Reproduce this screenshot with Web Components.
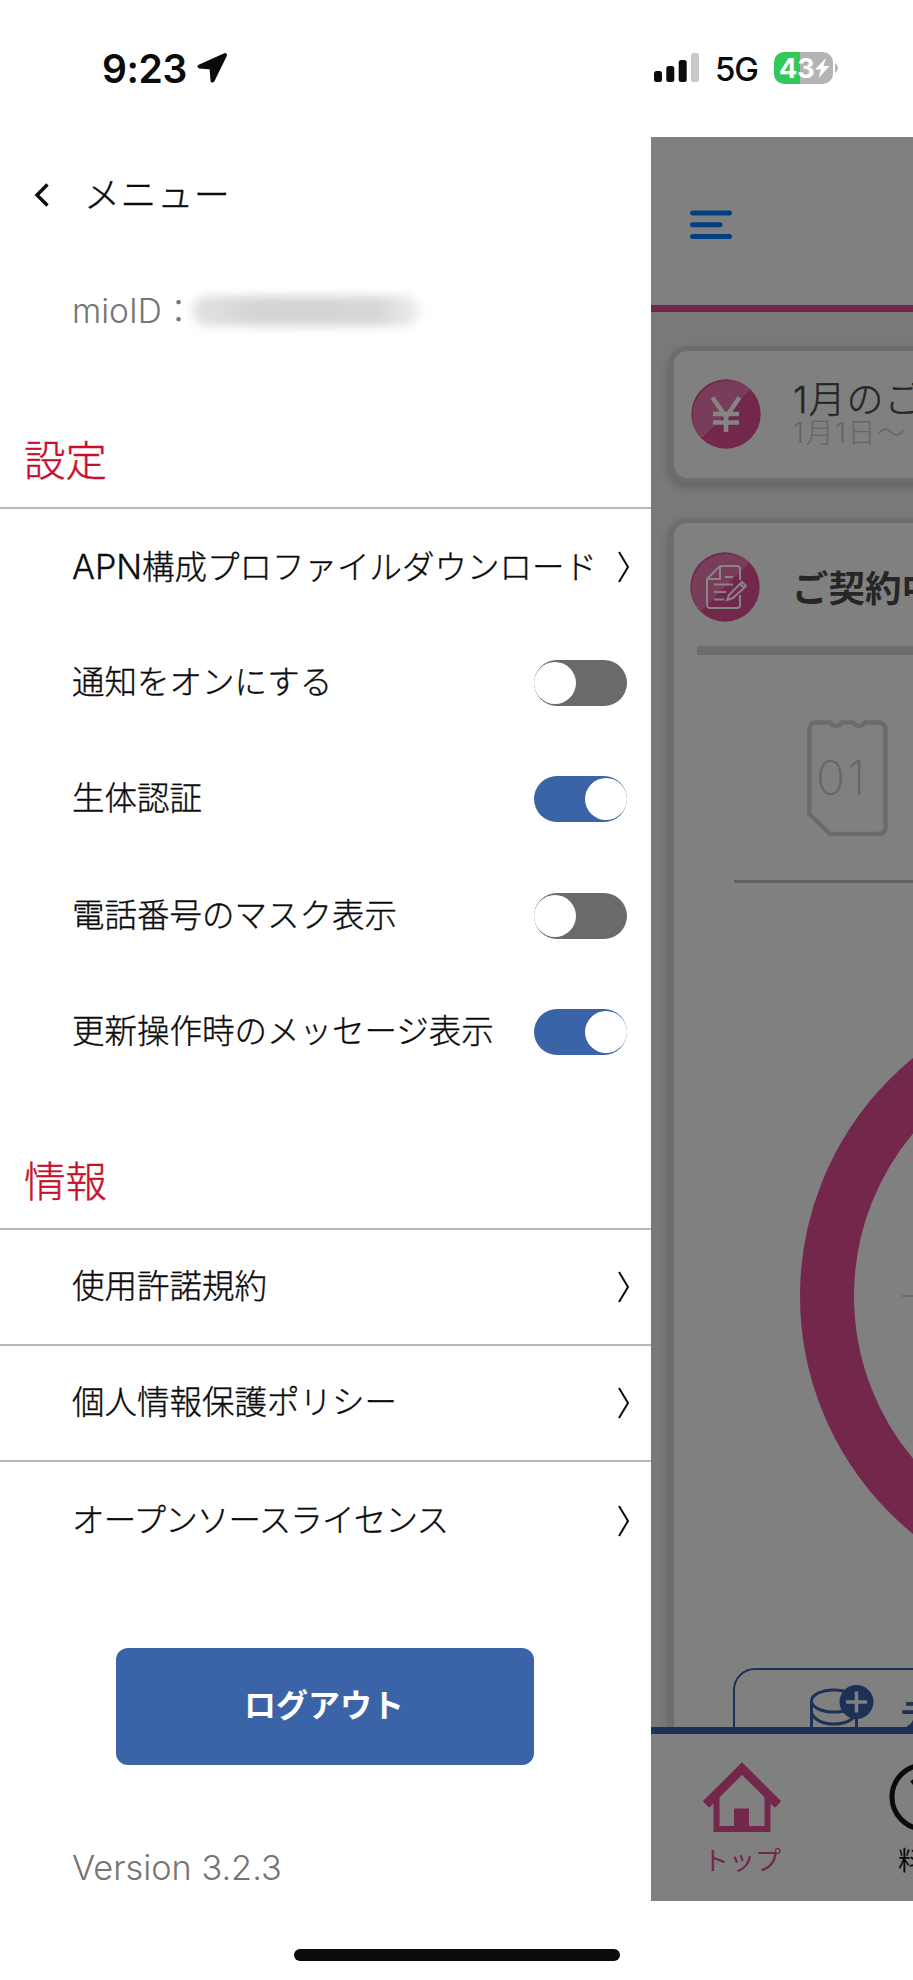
<!DOCTYPE html>
<html lang="ja">
<head>
<meta charset="utf-8">
<title>メニュー</title>
<style>
body {
    margin:0;width:913px;height:1980px;overflow:hidden;
    background:#fff;color:#0b0b0b;
    font-family:Inter,"Noto Sans CJK JP",sans-serif;font-weight:300;
    --red:#c8102e;
    --blue:#3b63a8;
    --navy:#1d3157;
    --plum:#73274b;
    --dim:#808080;
    --rule:#b8b8b8;
}
main {
    display:flex;height:1764px;
}
.latin {
    font-size:34px;
}
</style>
</head>
<body>
<status-bar time="9:23" network="5G" battery="43"></status-bar>
<main>
    <side-drawer>
        <drawer-section label="設定">
            <menu-row link><span class="latin">APN</span>構成プロファイルダウンロード</menu-row>
            <menu-row>通知をオンにする<toggle-switch slot="end"></toggle-switch></menu-row>
            <menu-row>生体認証<toggle-switch slot="end" on></toggle-switch></menu-row>
            <menu-row>電話番号のマスク表示<toggle-switch slot="end"></toggle-switch></menu-row>
            <menu-row>更新操作時のメッセージ表示<toggle-switch slot="end" on></toggle-switch></menu-row>
        </drawer-section>
        <drawer-section label="情報">
            <menu-row link lined>使用許諾規約</menu-row>
            <menu-row link lined>個人情報保護ポリシー</menu-row>
            <menu-row link tight>オープンソースライセンス</menu-row>
        </drawer-section>
    </side-drawer>
    <home-page></home-page>
</main>
<home-indicator></home-indicator>

<script>
class View extends HTMLElement {
    constructor() {
        super();
        this.attachShadow({mode: 'open'});
    }
    connectedCallback() {
        this.shadowRoot.innerHTML = this.render();
    }
}

customElements.define('status-bar', class extends View {
    render() {
        return `
        <style>
        :host {
            display:flex;align-items:center;justify-content:space-between;
            box-sizing:border-box;height:137px;padding:0 75px 1px 102px;
            font-family:Inter,sans-serif;
        }
        div {display:flex;align-items:center;}
        svg {display:block;}
        time {font-size:39px;font-weight:600;letter-spacing:-.4px;margin-right:9px;}
        .net {font-size:33px;font-weight:500;letter-spacing:-1px;margin:2px 16px 0 15px;}
        .cell {
            box-sizing:border-box;
            width:59px;height:32px;padding-left:5px;border-radius:10px;
            background:linear-gradient(90deg,#34c759 26px,#b4b4b6 26px);
            color:#fff;font-size:27px;font-weight:700;
        }
        </style>
        <div>
            <time>${this.getAttribute('time')}</time>
            <svg width="32" height="32" viewBox="0 0 32 32"><path d="M29 3 3.5 14.5 15.5 15.5 16.5 28.5Z" fill="#0b0b0b" stroke="#0b0b0b" stroke-width="4" stroke-linejoin="round"/></svg>
        </div>
        <div>
            <svg width="46" height="30" viewBox="0 0 46 30"><g fill="#0b0b0b"><rect x="0" y="18" width="8" height="11" rx="2.5"/><rect x="12.3" y="13" width="8" height="16" rx="2.5"/><rect x="24.7" y="7" width="8" height="22" rx="2.5"/></g><rect x="37" y="0" width="8" height="29" rx="2.5" fill="#c8c8ca"/></svg>
            <span class="net">${this.getAttribute('network')}</span>
            <div class="cell"><span>${this.getAttribute('battery')}</span>
            <svg width="15" height="22" viewBox="0 0 15 22"><path d="M11 1 0 12.5H6L3.5 21 14.5 9H8.5Z" fill="#fff"/></svg></div>
            <svg width="5" height="12" viewBox="0 0 5 12"><path d="M2 1Q5 3 5 6T2 11Z" fill="#b4b4b6"/></svg>
        </div>`;
    }
});

customElements.define('toggle-switch', class extends View {
    render() {
        return `
        <style>
        :host {
            display:flex;align-items:center;box-sizing:border-box;
            width:93px;height:46px;border-radius:23px;
            background:#6a6a6a;
        }
        :host([on]) {background:var(--blue);justify-content:flex-end;}
        i {width:42px;height:42px;border-radius:50%;background:#fff;}
        </style>
        <i></i>`;
    }
});

customElements.define('menu-row', class extends View {
    render() {
        return `
        <style>
        :host {
            display:flex;align-items:center;justify-content:space-between;
            box-sizing:border-box;height:116.2px;padding:0 24px 0 72px;
            font-size:32.5px;line-height:48px;white-space:nowrap;
            -webkit-text-stroke:.35px;
        }
        :host([link]) {padding-right:21px;}
        :host([lined]) {border-bottom:2px solid var(--rule);}
        :host([tight]) {letter-spacing:-.8px;padding-top:2px;}
        svg {display:none;}
        :host([link]) svg {display:block;}
        </style>
        <span><slot></slot></span>
        <slot name="end"></slot>
        <svg width="12" height="32" viewBox="0 0 12 32"><path d="M1 1 10 16 1 31" fill="none" stroke="#0b0b0b" stroke-width="2"/></svg>`;
    }
});

customElements.define('drawer-section', class extends View {
    render() {
        return `
        <style>
        :host {display:block;}
        h2 {
            box-sizing:border-box;height:96px;margin:0;padding:18px 0 0 24px;
            border-bottom:2px solid var(--rule);
            color:var(--red);font-size:41.5px;font-weight:300;line-height:60px;
            -webkit-text-stroke:.4px;
        }
        </style>
        <h2>${this.getAttribute('label')}</h2>
        <slot></slot>`;
    }
});

customElements.define('side-drawer', class extends View {
    render() {
        return `
        <style>
        :host {
            display:flex;flex-direction:column;flex:none;
            width:651px;height:1764px;background:#fff;
        }
        header {
            display:flex;align-items:center;height:116px;padding-left:34px;
            font-size:36px;line-height:54px;letter-spacing:.6px;
            -webkit-text-stroke:.4px;
        }
        header svg {margin-right:34px;}
        .id {
            display:flex;align-items:center;height:116px;padding-left:72px;
            color:#757575;font-size:33.500px;line-height:48px;
        }
        .id b {
            width:228px;height:30px;margin-left:-3px;border-radius:15px;
            background:linear-gradient(90deg,#e2e2e4,#d4d4d7 30%,#d6d6d8 80%,#eee);filter:blur(5px);
        }
        ::slotted(drawer-section) {margin-top:44px;}
        button {
            width:418px;height:117px;margin:69px 0 0 116px;padding:0 2px 0 0;flex:none;
            border:0;border-radius:12px;background:var(--blue);
            color:#fff;font:700 32px/48px Inter,"Noto Sans CJK JP",sans-serif;
        }
        p {margin:79px 0 0 72px;color:#757575;font-size:34.3px;line-height:48px;}
        </style>
        <header><svg width="16" height="24" viewBox="0 0 16 24"><path d="M13.5 1.5 3 12 13.5 22.5" fill="none" stroke="#0b0b0b" stroke-width="3.4"/></svg>メニュー</header>
        <div class="id">mioID：<b></b></div>
        <slot></slot>
        <button>ログアウト</button>
        <p>Version 3.2.3</p>`;
    }
});

customElements.define('info-card', class extends View {
    render() {
        return `
        <style>
        :host {
            display:block;box-sizing:border-box;width:300px;margin-left:23px;
            border-radius:13px;background:var(--dim);
            box-shadow:0 0 1px 5px #6d6d6d,0 4px 7px 6px #666;
        }
        </style>
        <slot></slot>`;
    }
});

customElements.define('home-page', class extends View {
    // Two-tone round badge with a line icon on it
    disc(icon) {
        return `<svg width="70" height="70" viewBox="0 0 70 70"><circle cx="35" cy="35" r="34.7" fill="#73274b"/><path d="M59.5 10.5A34.7 34.7 0 0 0 10.5 59.5Z" fill="#7a3d59"/><g fill="none" stroke="#858585">${icon}</g></svg>`;
    }
    render() {
        return `
        <style>
        :host {
            display:flex;flex-direction:column;
            width:262px;height:1764px;overflow:hidden;
            background:#797979;color:#262626;white-space:nowrap;
        }
        svg {display:block;flex:none;overflow:visible;}
        header {
            display:flex;align-items:center;box-sizing:border-box;flex:none;
            height:175px;padding:7px 0 0 39px;
            background:var(--dim);border-bottom:7px solid var(--plum);
        }
        .body {height:1415px;overflow:hidden;}
        info-card:first-child {height:127px;margin-top:39px;}
        info-card:last-child {height:1260px;margin-top:45px;}
        .head {display:flex;align-items:center;gap:32px;padding-left:17px;}
        .bill {height:125px;}
        .bill strong {display:block;font-size:37px;font-weight:300;line-height:38px;letter-spacing:1px;padding-top:2px;-webkit-text-stroke:.4px;}
        .bill small {display:block;color:#666;font-size:28px;line-height:29px;letter-spacing:1.5px;}
        .plan {height:123px;padding-left:16px;padding-top:4px;box-sizing:border-box;gap:32px;font-size:36.5px;font-weight:700;line-height:54px;}
        .plan span {padding-top:4px;}
        hr {margin:0;border:0;}
        .thick {height:9px;margin-left:23px;background:#6c6c6c;}
        .thin {height:3px;margin:43px 0 0 60px;background:#616161;}
        .sim {
            display:grid;margin:65px 0 0 133px;width:82px;height:117px;
        }
        .sim > * {grid-area:1/1;}
        .sim span {color:#666;font-size:48px;font-weight:200;line-height:115px;padding-left:9px;letter-spacing:2px;}
        .ring {margin:106px 0 0 126px;}
        .charge {
            display:flex;box-sizing:border-box;margin:65px 0 0 59px;padding:17px 0 0 75px;gap:25px;
            width:300px;height:100px;border:2px solid var(--navy);border-radius:22px;
            color:var(--navy);font-size:32px;font-weight:700;line-height:48px;
        }
        .charge span {margin-top:4px;}
        nav {
            display:flex;box-sizing:border-box;flex:none;height:174px;
            padding:28px 0 0 0;
            background:var(--dim);border-top:7px solid var(--navy);
        }
        .tab {
            display:flex;flex-direction:column;align-items:center;flex:none;
            width:182px;font-size:26px;font-weight:400;line-height:38px;color:#0b0b0b;
        }
        .tab svg {height:70px;margin-bottom:10px;}
        .tab.now {color:var(--plum);}
        </style>
        <header><svg width="42" height="30" viewBox="0 0 42 30"><path d="M2.5 3H39.5M2.5 14.7H30M2.5 26.5H39.5" stroke="#004080" stroke-width="5" stroke-linecap="round"/></svg></header>
        <div class="body">
            <info-card>
                <div class="head bill">
                    ${this.disc('<path d="M21.5 18.5 35 38 48.5 18.5M35 36V53M22 35H48M22 43.5H48" stroke-width="4.5"/>')}
                    <div><strong>1月のご</strong><small>1月1日〜</small></div>
                </div>
            </info-card>
            <info-card>
                <div class="head plan">
                    ${this.disc('<path d="M50 28V17Q50 14 47 14H30L17 27V52Q17 56 20 56H47Q50 56 50 53V43M30 14V27H17M35 25H43M24 32.5H43M24 40H36M24 47.5H34" stroke-width="2"/><path d="M39 43 52 30 56 34 43 46 37 48ZM50 32 54 36" stroke-width="2"/>')}
                    <span>ご契約中</span>
                </div>
                <hr class="thick">
                <div class="sim">
                    <svg width="82" height="117" viewBox="0 0 82 117"><path d="M9 2.5H23Q26 6 29 6T35 2.5H46Q49 6 52 6T58 2.5H71Q78.5 2.5 78.5 10V107Q78.5 114 71 114H23L2.5 94V10Q2.5 2.5 9 2.5Z" fill="none" stroke="#6b6b6b" stroke-width="4.5"/></svg>
                    <span>01</span>
                </div>
                <hr class="thin">
                <svg class="ring" width="614" height="614" viewBox="0 0 614 614"><circle cx="307" cy="307" r="280" fill="none" stroke="#73274b" stroke-width="54"/><path d="M102 307H400" stroke="#6a6a6a" stroke-width="2"/></svg>
                <div class="charge">
                    <svg width="65" height="60" viewBox="0 0 65 60"><g fill="none" stroke="#1d3157" stroke-width="3"><ellipse cx="24" cy="14" rx="22.5" ry="11"/><path d="M1.5 14V60M46.5 14V60M1.5 26Q7 37 24 37T46.5 26"/></g><circle cx="46.5" cy="15" r="17" fill="#1d3157"/><path d="M36 15H57M46.5 4.5V25.5" stroke="#808080" stroke-width="3.5"/></svg>
                    <span>デ</span>
                </div>
            </info-card>
        </div>
        <nav>
            <div class="tab now">
                <svg width="78" height="70" viewBox="0 0 78 70"><path d="M3 42.5 39 6.5 75 42.5" fill="none" stroke="#73274b" stroke-width="9"/><path d="M13.5 34V67H64.5V34" fill="none" stroke="#73274b" stroke-width="6"/><path d="M31 46.5H46V68H31Z" fill="#73274b"/></svg>
                トップ
            </div>
            <div class="tab">
                <svg width="70" height="70" viewBox="0 0 70 70"><circle cx="35" cy="35" r="32" fill="none" stroke="#0b0b0b" stroke-width="5"/><path d="M23 18 35 35 47 18M35 35V54M24 36H46M24 43H46" fill="none" stroke="#0b0b0b" stroke-width="4"/></svg>
                料金
            </div>
        </nav>`;
    }
});

customElements.define('home-indicator', class extends View {
    render() {
        return `
        <style>
        :host {display:flex;justify-content:center;height:79px;}
        i {width:326px;height:12px;margin-top:48px;border-radius:6px;background:#0b0b0b;}
        </style>
        <i></i>`;
    }
});
</script>
</body>
</html>
